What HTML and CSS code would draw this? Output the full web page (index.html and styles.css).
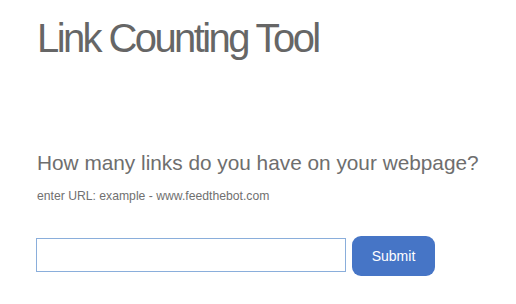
FILE: index.html
```html
<!DOCTYPE html>
<html>
<head>
<meta charset="utf-8">
<link rel="stylesheet" href="styles.css">
</head>
<body>
<div class="page">
  <h1 class="title">Link Counting Tool</h1>
  <h2 class="question">How many links do you have on your webpage?</h2>
  <p class="hint">enter URL: example - www.feedthebot.com</p>
  <form class="url-form">
    <input class="url-input" type="text">
    <button class="submit-btn" type="button">Submit</button>
  </form>
</div>
</body>
</html>
```
FILE: styles.css
```css
html, body {
  margin: 0;
  padding: 0;
  background: #ffffff;
}
body {
  font-family: "Liberation Sans", Arial, sans-serif;
}
.page {
  padding: 18px 0 0 37px;
}
.title {
  margin: 0;
  font-size: 40px;
  line-height: 40px;
  font-weight: normal;
  color: #666666;
  letter-spacing: -2.6px;
}
.question {
  margin: 94px 0 0 0;
  font-size: 20.8px;
  line-height: 21px;
  font-weight: normal;
  color: #6e6e6e;
}
.hint {
  margin: 17px 0 0 0;
  font-size: 12.2px;
  line-height: 12px;
  color: #707070;
}
.url-form {
  display: flex;
  align-items: flex-start;
  gap: 6px;
  margin: 34px 0 0 -1px;
}
.url-input {
  box-sizing: border-box;
  width: 310px;
  height: 34px;
  margin: 2px 0 0 0;
  border: 1px solid #8aaedb;
  padding: 0 6px;
  outline: none;
  background: #fff;
}
.submit-btn {
  box-sizing: border-box;
  width: 83px;
  height: 40px;
  border: none;
  border-radius: 9px;
  background: #4675c6;
  color: #ffffff;
  font-family: "Liberation Sans", Arial, sans-serif;
  font-size: 14px;
  padding: 0;
}
```
